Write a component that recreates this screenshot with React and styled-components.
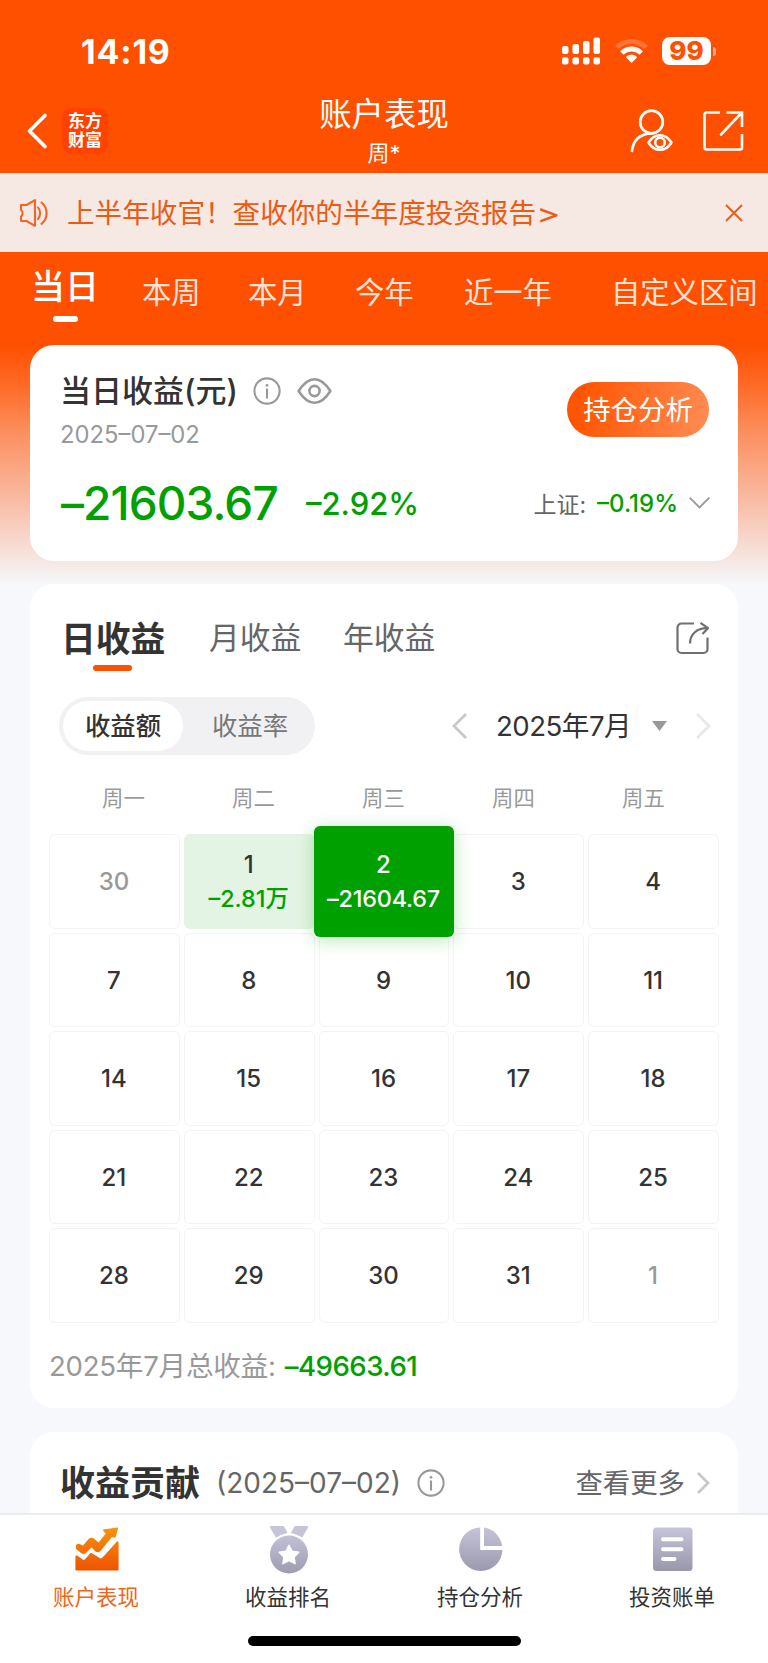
import React from 'react';
import styled, { createGlobalStyle, css } from 'styled-components';

const GlobalStyle = createGlobalStyle`
  * {
    box-sizing: border-box;
  }

  body {
    margin: 0;
    background: #f6f8fb;
    font-family: Inter, 'Noto Sans CJK SC', sans-serif;
    font-weight: 390;
    color: #333;
  }

  svg {
    display: block;
    flex: none;
  }
`;

const Page = styled.div`
  width: 768px;
  height: 1663px;
  overflow: hidden;
  display: flex;
  flex-direction: column;
  background: linear-gradient(
    #ff5000 0,
    #ff5000 345px,
    #ff6a26 385px,
    #fc8d5c 430px,
    #f9b59a 490px,
    #f6e3dd 556px,
    #f6f8fb 584px
  );
`;

const StatusBar = styled.div`
  flex: none;
  height: 90px;
  padding: 12px 52px 0 81px;
  display: flex;
  align-items: center;
  justify-content: space-between;
  color: #fff;
`;

const Clock = styled.div`
  font-size: 34px;
  font-weight: 750;
  letter-spacing: 0.8px;
`;

const StatusIcons = styled.div`
  display: flex;
  align-items: center;
  gap: 14px;
`;

const Battery = styled.div`
  display: flex;
  align-items: center;
  gap: 2px;
`;

const BatteryBody = styled.div`
  width: 49px;
  height: 28px;
  border-radius: 8px;
  background: #fff;
  color: #ff5000;
  font-size: 26px;
  line-height: 28px;
  font-weight: 800;
  text-align: center;
`;

const BatteryCap = styled.div`
  width: 3px;
  height: 9px;
  border-radius: 0 3px 3px 0;
  background: rgba(255, 255, 255, 0.5);
`;

const NavBar = styled.header`
  flex: none;
  height: 83px;
  padding: 0 24px 0 26px;
  display: grid;
  grid-template-columns: 1fr 130px 1fr;
  color: #fff;
`;

const NavLeft = styled.div`
  display: flex;
  align-items: center;
  gap: 14px;
  height: 81px;
`;

const Logo = styled.div`
  width: 46px;
  height: 46px;
  padding-top: 4px;
  border-radius: 9px;
  background: #ff4200;
  font-family: 'Liberation Sans', 'Noto Sans CJK SC', sans-serif;
  font-size: 17px;
  font-weight: 700;
  text-align: center;
`;

const LogoLine = styled.div`
  height: 19px;
  line-height: 19px;
`;

const NavTitle = styled.div`
  margin-left: -2px;
  padding-top: 1px;
  text-align: center;
  font-size: 32.4px;
  line-height: 48px;
  white-space: nowrap;
`;

const NavSub = styled.div`
  font-size: 22px;
  line-height: 28px;
`;

const NavRight = styled.div`
  display: flex;
  align-items: center;
  justify-content: flex-end;
  gap: 30px;
  height: 81px;
`;

const Notice = styled.div`
  flex: none;
  height: 79px;
  padding: 0 25px 0 19px;
  display: flex;
  align-items: center;
  background: #f6e8e3;
  color: #ea5b14;
`;

const NoticeText = styled.div`
  flex: 1;
  margin-left: 18px;
  font-size: 27.6px;
  line-height: 40px;
  white-space: nowrap;
`;

const NoticeArrow = styled.span`
  display: inline-block;
  transform: scaleX(1.35);
  transform-origin: left;
`;

const RangeTabs = styled.nav`
  flex: none;
  height: 93px;
  padding-left: 31px;
  display: flex;
  align-items: flex-start;
  white-space: nowrap;
`;

const RangeTab = styled.div`
  flex: none;
  width: ${(p) => p.$width}px;
  padding-top: 19px;
  font-size: 29.3px;
  line-height: 44px;
  color: rgba(255, 255, 255, 0.86);

  ${(p) =>
    p.$active &&
    css`
      padding-top: 13px;
      font-size: 34px;
      font-weight: 500;
      color: #fff;

      &::after {
        content: '';
        display: block;
        width: 25px;
        height: 6px;
        margin: 7px 0 0 22px;
        border-radius: 3px;
        background: #fff;
      }
    `}
`;

const Card = styled.section`
  flex: none;
  margin: 0 30px;
  border-radius: 24px;
  background: #fff;
`;

const Summary = styled(Card)`
  height: 216px;
  padding: 0 28px 0 30px;
`;

const SummaryTop = styled.div`
  display: flex;
  justify-content: space-between;
  height: 120px;
`;

const SummaryTitle = styled.div`
  display: flex;
  align-items: center;
  height: 44px;
  margin-top: 24px;
  font-size: 31px;
  line-height: 44px;
  font-weight: 500;

  svg {
    margin-left: 15.5px;
  }
`;

const SummaryDate = styled.div`
  font-size: 23.8px;
  line-height: 32px;
  margin-top: 6px;
  color: #999;
`;

const PillButton = styled.button`
  width: 142px;
  height: 55px;
  margin: 37px 1px 0 0;
  padding: 0 0 3px;
  border: 0;
  border-radius: 28px;
  background: linear-gradient(100deg, #ff5500 10%, #ff8a50 95%);
  color: #fff;
  font-family: inherit;
  font-size: 27.4px;
  font-weight: 390;
`;

const SummaryFigures = styled.div`
  display: flex;
  align-items: center;
  height: 76px;
  color: #00a000;
  font-weight: 500;
  white-space: nowrap;
`;

const Amount = styled.div`
  width: 246px;
  padding-left: 1px;
  font-size: 46px;
  letter-spacing: -0.9px;
`;

const Percent = styled.div`
  flex: 1;
  font-size: 31px;
`;

const IndexLabel = styled.span`
  margin-right: 11px;
  font-size: 23px;
  font-weight: 390;
  color: #666;
`;

const IndexValue = styled.span`
  margin-right: 11px;
  font-size: 24px;
`;

const Calendar = styled(Card)`
  height: 824px;
  margin-top: 23px;
  padding: 0 19px;
`;

const PeriodTabs = styled.div`
  display: flex;
  align-items: flex-start;
  height: 113px;
  padding: 28px 10px 0 12px;
`;

const PeriodTab = styled.div`
  width: ${(p) => p.$width}px;
  font-size: 30.8px;
  line-height: 52px;
  color: #666;

  ${(p) =>
    p.$active &&
    css`
      padding-top: 1px;
      font-size: 34.8px;
      font-weight: 700;
      color: #333;

      &::after {
        content: '';
        display: block;
        width: 39px;
        height: 6px;
        margin: 0 0 0 32px;
        border-radius: 3px;
        background: #ff5000;
      }
    `}
`;

const ShareSlot = styled.div`
  margin: 9px 0 0 auto;
`;

const Controls = styled.div`
  display: flex;
  align-items: center;
  justify-content: space-between;
  height: 58px;
  padding: 0 8px 0 10px;
`;

const Segment = styled.div`
  display: flex;
  width: 256px;
  height: 58px;
  padding: 4px;
  border-radius: 29px;
  background: #f1f1f4;
`;

const SegmentItem = styled.div`
  flex: none;
  width: ${(p) => (p.$active ? 120 : 134)}px;
  border-radius: 26px;
  background: ${(p) => (p.$active ? '#fff' : 'transparent')};
  color: ${(p) => (p.$active ? '#333' : '#777')};
  font-size: 25.4px;
  line-height: 50px;
  font-weight: ${(p) => (p.$active ? 500 : 390)};
  text-align: center;
`;

const MonthPicker = styled.div`
  display: flex;
  align-items: center;
`;

const MonthLabel = styled.div`
  width: 156px;
  margin-left: 29px;
  font-size: 27.6px;
  line-height: 40px;
  letter-spacing: -0.5px;
`;

const TriangleSlot = styled.div`
  width: 44px;
`;

const Weekdays = styled.div`
  display: grid;
  grid-template-columns: repeat(5, 130px);
  justify-content: center;
  height: 79px;
  margin-left: -1px;
  padding-top: 26px;
  font-size: 21.4px;
  line-height: 34px;
  color: #999;
  text-align: center;
`;

const Days = styled.div`
  display: grid;
  grid-template-columns: repeat(5, 1fr);
  grid-auto-rows: 94.5px;
  gap: 4px;
`;

const Day = styled.div`
  display: flex;
  flex-direction: column;
  align-items: center;
  justify-content: center;
  padding: 2px 1px 0 0;
  border: 1px solid #f3f3f3;
  border-radius: 6px;
  font-size: 24px;
  line-height: 34px;
  font-weight: 500;
  white-space: nowrap;
  color: ${(p) => (p.$muted ? '#999' : '#333')};

  ${(p) =>
    p.$loss &&
    css`
      border-color: transparent;
      background: #e4f4e4;
    `}

  ${(p) =>
    p.$selected &&
    css`
      z-index: 1;
      margin: -8px -4.5px;
      border: 0;
      background: #00a000;
      color: #fff;
      box-shadow: 0 3px 18px rgba(0, 160, 0, 0.28);
    `}
`;

const DayValue = styled.span`
  font-size: 23.4px;
  letter-spacing: ${(p) => (p.$selected ? '-0.2px' : 0)};
  color: ${(p) => (p.$selected ? '#fff' : '#00a000')};
`;

const Total = styled.div`
  display: flex;
  margin-top: 21px;
  font-size: 27.6px;
  line-height: 44px;
  letter-spacing: -0.25px;
  color: #999;
`;

const TotalValue = styled.span`
  margin-left: 9px;
  font-weight: 500;
  letter-spacing: -0.5px;
  color: #00a000;
`;

const Contribution = styled(Card)`
  height: 81px;
  margin-top: 24px;
  padding: 21px 28px 0 30px;
  display: flex;
  align-items: center;
  border-radius: 24px 24px 0 0;
`;

const ContributionTitle = styled.div`
  font-size: 35px;
  line-height: 44px;
  font-weight: 700;
`;

const ContributionDate = styled.div`
  margin: 0 16px 0 16px;
  font-size: 28px;
  color: #666;
`;

const More = styled.div`
  margin: 0 12px 0 auto;
  font-size: 27.4px;
  line-height: 40px;
  color: #666;
`;

const TabBar = styled.footer`
  flex: none;
  height: 150px;
  border-top: 2px solid #ececee;
  background: #fff;
  display: flex;
  flex-direction: column;
`;

const TabItems = styled.div`
  display: grid;
  grid-template-columns: repeat(4, 1fr);
  height: 121px;
`;

const TabItem = styled.div`
  display: flex;
  flex-direction: column;
  align-items: center;
  padding-top: 9px;
  font-size: 21.5px;
  line-height: 32px;
  color: ${(p) => (p.$active ? '#f26419' : '#333')};

  svg {
    margin: 0 0 7px 1px;
  }
`;

const HomeIndicator = styled.div`
  width: 273px;
  height: 10px;
  margin: 0 auto;
  border-radius: 5px;
  background: #000;
`;

const SignalIcon = () => (
  <svg width="39" height="28" viewBox="0 0 39 28" fill="#fff">
    <rect x="0" y="9" width="6.5" height="8" rx="2" />
    <rect x="10.5" y="7" width="6.5" height="10" rx="2" />
    <rect x="21" y="4" width="6.5" height="13" rx="2" />
    <rect x="31.5" y="0.5" width="6.5" height="16.5" rx="2" />
    <rect x="0" y="20.3" width="6.5" height="7.2" rx="2" />
    <rect x="10.5" y="20.3" width="6.5" height="7.2" rx="2" />
    <rect x="21" y="20.3" width="6.5" height="7.2" rx="2" />
    <rect x="31.5" y="20.3" width="6.5" height="7.2" rx="2" />
  </svg>
);

const WifiIcon = () => (
  <svg width="33" height="26" viewBox="0 0 33 26" fill="#fff">
    <path
      d="M0.6 7.2C9.3-1.1 23.7-1.1 32.4 7.2a.8.8 0 0 1 0 1.1L30 10.6a.8.8 0 0 1-1.1 0C22 4.2 11 4.2 4.1 10.6a.8.8 0 0 1-1.1 0L.6 8.3a.8.8 0 0 1 0-1.1Z"
      opacity="0.22"
    />
    <path d="M5.7 12.8C11.7 7.2 21.3 7.2 27.3 12.8a.8.8 0 0 1 0 1.1l-2.4 2.4a.8.8 0 0 1-1.1 0C19.7 12.6 13.3 12.6 9.2 16.3a.8.8 0 0 1-1.1 0L5.7 13.9a.8.8 0 0 1 0-1.1Z" />
    <path d="M11.3 18.7C14.2 16.1 18.8 16.1 21.7 18.7a.8.8 0 0 1 0 1.1L17.1 24.4a.8.8 0 0 1-1.1 0L11.3 19.8a.8.8 0 0 1 0-1.1Z" />
  </svg>
);

const BackIcon = () => (
  <svg width="22" height="36" viewBox="0 0 22 36" fill="none" stroke="#fff" strokeWidth="3.6" strokeLinecap="round" strokeLinejoin="round">
    <path d="M19 2.5L3.5 18l15.5 15.5" />
  </svg>
);

const UserEyeIcon = () => (
  <svg width="43" height="44" viewBox="0 0 43 44" fill="none" stroke="#fff" strokeWidth="2.7" strokeLinecap="round">
    <circle cx="21.5" cy="13" r="11.3" />
    <path d="M2 42C3 31.5 10 24.6 21.5 24.3" />
    <path d="M18.5 33.5C24.5 23.7 35.5 23.7 41.5 33.5C35.5 43.3 24.5 43.3 18.5 33.5Z" strokeWidth="2.5" strokeLinejoin="round" />
    <circle cx="30" cy="33.5" r="4.8" strokeWidth="2.5" />
  </svg>
);

const OpenIcon = () => (
  <svg width="41" height="42" viewBox="0 0 41 42" fill="none" stroke="#fff" strokeWidth="2.6">
    <path d="M17 2.5H3.5a2 2 0 0 0-2 2V37.5a2 2 0 0 0 2 2H37a2 2 0 0 0 2-2V24" />
    <path d="M23.5 2.5H39V17" />
    <path d="M38.5 3L18 24.5" strokeLinecap="round" />
  </svg>
);

const SpeakerIcon = () => (
  <svg width="30" height="30" viewBox="0 0 30 30" fill="none" stroke="#f2652a" strokeWidth="2.1" strokeLinecap="round" strokeLinejoin="round">
    <path d="M2 7h5.5L16 2.2V27.8L7.5 23H2v-4.5a4 4 0 0 0 0-6.5Z" />
    <path d="M19 9.5C21.8 12 21.8 18 19 21" />
    <path d="M22.5 4.5C29.3 10 29.3 20.5 22.5 25.8" />
  </svg>
);

const CloseIcon = () => (
  <svg width="18" height="18" viewBox="0 0 18 18" stroke="#ea5b14" strokeWidth="1.8">
    <path d="M1 1l16 16M17 1L1 17" />
  </svg>
);

const InfoIcon = () => (
  <svg width="28" height="28" viewBox="0 0 28 28" fill="none" stroke="#999" strokeWidth="2.1">
    <circle cx="14" cy="14" r="12.6" />
    <path d="M14 11.5V21.5" />
    <circle cx="14" cy="8.3" r="1.4" fill="#999" stroke="none" />
  </svg>
);

const EyeIcon = () => (
  <svg width="35" height="28" viewBox="0 0 35 28" fill="none" stroke="#999" strokeWidth="2.6">
    <path d="M1.6 14C7 5.5 12 2.2 17.5 2.2S28 5.5 33.4 14C28 22.5 23 25.8 17.5 25.8S7 22.5 1.6 14Z" strokeLinejoin="round" />
    <circle cx="17.5" cy="14" r="5.1" />
  </svg>
);

const Chevron = ({ width, height, d, color, weight }) => (
  <svg width={width} height={height} viewBox={`0 0 ${width} ${height}`} fill="none" stroke={color} strokeWidth={weight}>
    <path d={d} />
  </svg>
);

const ShareIcon = () => (
  <svg width="33" height="34" viewBox="0 0 33 34" fill="none" stroke="#707070" strokeWidth="2.2">
    <path d="M18 2.5H5.5a4 4 0 0 0-4 4V28a4 4 0 0 0 4 4H27.5a4 4 0 0 0 4-4V16.500" />
    <path d="M14 22.5C14 13.5 20.5 7.2 31 7.2" />
    <path d="M24.5 1.800L32 7.2L26.5 13" strokeLinejoin="round" />
  </svg>
);

const TabGradient = ({ id, from, to }) => (
  <linearGradient id={id} x1="0" y1="0" x2="0" y2="1">
    <stop offset="0" stopColor={from} />
    <stop offset="1" stopColor={to} />
  </linearGradient>
);

const TrendIcon = () => (
  <svg width="50" height="50" viewBox="0 0 50 50">
    <defs>
      <linearGradient id="trend" gradientUnits="userSpaceOnUse" x1="0" y1="4" x2="0" y2="47">
        <stop offset="0" stopColor="#f8920c" />
        <stop offset="1" stopColor="#ee5200" />
      </linearGradient>
    </defs>
    <g fill="url(#trend)" stroke="url(#trend)" strokeLinejoin="round">
      <path d="M4.5 21.5Q6.500 19.500 8.500 21L11 22.500L17.500 15Q19.500 13.500 21.500 15L26.500 19.500L34.500 9.500L31.500 6L45.500 4L43 13L39.500 12.500L28 26.500Q26 28.500 24 27L19.500 22.500L13.500 28.500Q11.500 30 9.500 28.500L4.500 24.500Z" strokeWidth="1.2" />
      <path d="M4.500 32.500L11.500 37.500Q13 37.500 19 30L28 35.500Q30 36 33 32.500L45.500 18.500V45.500H4.500Z" strokeWidth="2.2" />
    </g>
  </svg>
);

const MedalIcon = () => (
  <svg width="50" height="50" viewBox="0 0 50 50">
    <defs>
      <TabGradient id="medal" from="#c2c0d4" to="#9e9cb0" />
    </defs>
    <path d="M7 2H18.5Q20 2 20.8 3.5L23.500 9Q17 10.200 12 13.800L6 3.5Q5.500 2 7 2Z" fill="#c6c4d7" />
    <path d="M43 2H32Q30.500 2 29.800 3.500L26.800 9Q33 10 38.200 13.600L44 3.500Q44.500 2 43 2Z" fill="#c6c4d7" />
    <circle cx="25" cy="30.5" r="19" fill="url(#medal)" />
    <path
      d="M25 21.3L28.1 27.3L34.8 28.3L30 33.1L31.1 39.7L25 36.6L18.9 39.7L20 33.1L15.2 28.3L21.9 27.3Z"
      fill="#fff"
      stroke="#fff"
      strokeWidth="1.5"
      strokeLinejoin="round"
    />
  </svg>
);

const PieIcon = () => (
  <svg width="50" height="50" viewBox="0 0 50 50">
    <defs>
      <linearGradient id="pie" gradientUnits="userSpaceOnUse" x1="0" y1="3" x2="0" y2="47">
        <stop offset="0" stopColor="#c6c4d8" />
        <stop offset="1" stopColor="#9b99ad" />
      </linearGradient>
    </defs>
    <g fill="url(#pie)">
      <path d="M24.2 3.5V26H46.5A21.7 21.7 0 1 1 24.2 3.5Z" />
      <path d="M28 3.5A21 21 0 0 1 46 22H28Z" />
    </g>
  </svg>
);

const BillIcon = () => (
  <svg width="50" height="50" viewBox="0 0 50 50">
    <defs>
      <TabGradient id="bill" from="#c6c4d8" to="#9997ab" />
    </defs>
    <rect x="5" y="3.5" width="39.5" height="43.5" rx="3.5" fill="url(#bill)" />
    <path d="M15 15.3H33.5M15 25.3H33.5M15 35H26.5" stroke="#fff" strokeWidth="4" strokeLinecap="round" />
  </svg>
);

const ranges = [
  { label: '当日', width: 111, active: true },
  { label: '本周', width: 106 },
  { label: '本月', width: 107 },
  { label: '今年', width: 109 },
  { label: '近一年', width: 147 },
  { label: '自定义区间', width: 150 },
];

const periods = [
  { label: '日收益', width: 148, active: true },
  { label: '月收益', width: 134 },
  { label: '年收益', width: 120 },
];

const weekdays = ['周一', '周二', '周三', '周四', '周五'];

const days = [
  { day: 30, muted: true },
  { day: 1, value: '–2.81万' },
  { day: 2, value: '–21604.67', selected: true },
  { day: 3 },
  { day: 4 },
  ...[7, 8, 9, 10, 11, 14, 15, 16, 17, 18, 21, 22, 23, 24, 25, 28, 29, 30, 31].map((day) => ({ day })),
  { day: 1, muted: true },
];

const tabs = [
  { label: '账户表现', Icon: TrendIcon, active: true },
  { label: '收益排名', Icon: MedalIcon },
  { label: '持仓分析', Icon: PieIcon },
  { label: '投资账单', Icon: BillIcon },
];

const App = () => (
  <Page>
    <GlobalStyle />
    <StatusBar>
      <Clock>14:19</Clock>
      <StatusIcons>
        <SignalIcon />
        <WifiIcon />
        <Battery>
          <BatteryBody>99</BatteryBody>
          <BatteryCap />
        </Battery>
      </StatusIcons>
    </StatusBar>

    <NavBar>
      <NavLeft>
        <BackIcon />
        <Logo>
          <LogoLine>东方</LogoLine>
          <LogoLine>财富</LogoLine>
        </Logo>
      </NavLeft>
      <NavTitle>
        账户表现
        <NavSub>周*</NavSub>
      </NavTitle>
      <NavRight>
        <UserEyeIcon />
        <OpenIcon />
      </NavRight>
    </NavBar>

    <Notice>
      <SpeakerIcon />
      <NoticeText>
        上半年收官！查收你的半年度投资报告<NoticeArrow>&gt;</NoticeArrow>
      </NoticeText>
      <CloseIcon />
    </Notice>

    <RangeTabs>
      {ranges.map(({ label, width, active }) => (
        <RangeTab key={label} $width={width} $active={active}>
          {label}
        </RangeTab>
      ))}
    </RangeTabs>

    <Summary>
      <SummaryTop>
        <div>
          <SummaryTitle>
            当日收益(元)
            <InfoIcon />
            <EyeIcon />
          </SummaryTitle>
          <SummaryDate>2025–07–02</SummaryDate>
        </div>
        <PillButton>持仓分析</PillButton>
      </SummaryTop>
      <SummaryFigures>
        <Amount>–21603.67</Amount>
        <Percent>–2.92%</Percent>
        <IndexLabel>上证:</IndexLabel>
        <IndexValue>–0.19%</IndexValue>
        <Chevron width={21} height={12} d="M.7 .7L10.5 10.5L20.3 .7" color="#999" weight={1.8} />
      </SummaryFigures>
    </Summary>

    <Calendar>
      <PeriodTabs>
        {periods.map(({ label, width, active }) => (
          <PeriodTab key={label} $width={width} $active={active}>
            {label}
          </PeriodTab>
        ))}
        <ShareSlot>
          <ShareIcon />
        </ShareSlot>
      </PeriodTabs>
      <Controls>
        <Segment>
          <SegmentItem $active>收益额</SegmentItem>
          <SegmentItem>收益率</SegmentItem>
        </Segment>
        <MonthPicker>
          <Chevron width={15} height={26} d="M14 1L2 13L14 25" color="#c8c8c8" weight={2.8} />
          <MonthLabel>2025年7月</MonthLabel>
          <TriangleSlot>
            <svg width="15" height="10" viewBox="0 0 15 10" fill="#999">
              <path d="M0 0H15L7.5 10Z" />
            </svg>
          </TriangleSlot>
          <Chevron width={15} height={26} d="M1 1L13 13L1 25" color="#e8e8e8" weight={2.8} />
        </MonthPicker>
      </Controls>
      <Weekdays>
        {weekdays.map((name) => (
          <div key={name}>{name}</div>
        ))}
      </Weekdays>
      <Days>
        {days.map(({ day, value, muted, selected }, i) => (
          <Day key={i} $muted={muted} $loss={!!value} $selected={selected}>
            {day}
            {value && <DayValue $selected={selected}>{value}</DayValue>}
          </Day>
        ))}
      </Days>
      <Total>
        2025年7月总收益:
        <TotalValue>–49663.61</TotalValue>
      </Total>
    </Calendar>

    <Contribution>
      <ContributionTitle>收益贡献</ContributionTitle>
      <ContributionDate>(2025–07–02)</ContributionDate>
      <InfoIcon />
      <More>查看更多</More>
      <Chevron width={13} height={22} d="M1 1L11 11L1 21" color="#c8c8c8" weight={2.8} />
    </Contribution>

    <TabBar>
      <TabItems>
        {tabs.map(({ label, Icon, active }) => (
          <TabItem key={label} $active={active}>
            <Icon />
            {label}
          </TabItem>
        ))}
      </TabItems>
      <HomeIndicator />
    </TabBar>
  </Page>
);

export default App;
